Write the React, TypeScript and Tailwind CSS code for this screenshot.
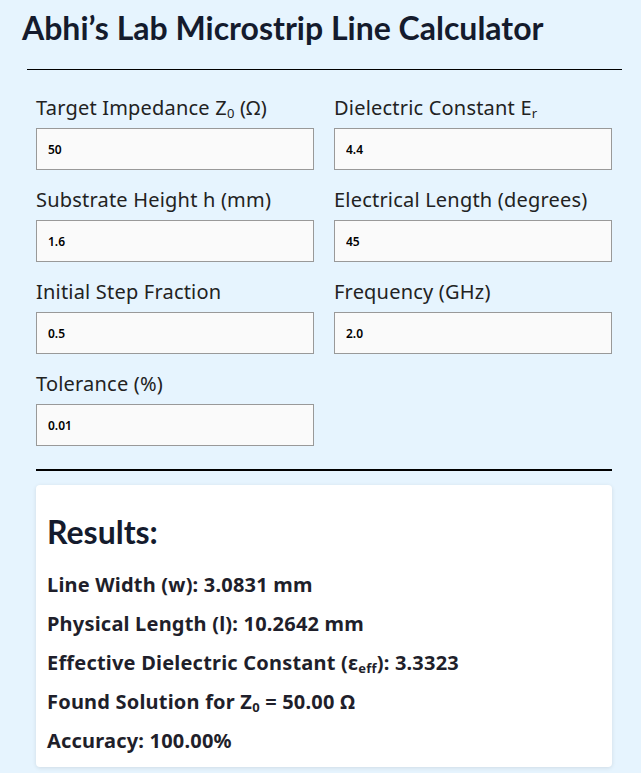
import React from 'react';

const body = { fontFamily: '"Noto Sans", "Open Sans", sans-serif' };
const heading = { fontFamily: 'Lato, "Noto Sans", sans-serif' };

function Field({ label, value }: { label: React.ReactNode; value: string }) {
  return (
    <div className="flex flex-col">
      <label className="text-[20px] leading-[28px] tracking-[0.2px] text-[#222]">{label}</label>
      <input
        readOnly
        value={value}
        className="mt-[6px] h-[42px] w-full border border-[#999] bg-[#fafafa] px-[11px] text-[12px] font-semibold text-black outline-none"
      />
    </div>
  );
}

export default function App() {
  return (
    <div className="min-h-[773px] bg-[#e6f4fe] text-[#1a1a2e]" style={body}>
      <h1 className="px-[22px] pt-[8px] text-[32px] font-bold leading-[40px] text-[#141b2d]" style={heading}>
        Abhi’s Lab Microstrip Line Calculator
      </h1>
      <div className="mx-[27px] mt-[21px] w-[595px] border-t border-black" />

      <div className="mx-[36px] mt-[24px] w-[576px]">
        <div className="grid grid-cols-2 gap-x-[20px] gap-y-[16px]">
          <Field label={<>Target Impedance Z<sub className="text-[13px]">0</sub> (Ω)</>} value="50" />
          <Field label={<>Dielectric Constant E<sub className="text-[13px]">r</sub></>} value="4.4" />
          <Field label="Substrate Height h (mm)" value="1.6" />
          <Field label="Electrical Length (degrees)" value="45" />
          <Field label="Initial Step Fraction" value="0.5" />
          <Field label="Frequency (GHz)" value="2.0" />
          <Field label="Tolerance (%)" value="0.01" />
        </div>

        <div className="mt-[23px] border-t-2 border-black" />

        <div className="mt-[14px] rounded-[4px] bg-white px-[11px] pb-[13px] pt-[29px] shadow-[0_1px_4px_rgba(0,0,0,0.1)]">
          <h2 className="text-[32px] font-bold leading-[36px] text-[#141b2d]" style={heading}>
            Results:
          </h2>
          <div className="mt-[22px] flex flex-col gap-[13px] text-[20px] font-bold leading-[26px] tracking-[0.2px] text-[#1f1f2b]">
            <p>Line Width (w): 3.0831 mm</p>
            <p>Physical Length (l): 10.2642 mm</p>
            <p>
              Effective Dielectric Constant (ε<sub className="text-[13px]">eff</sub>): 3.3323
            </p>
            <p>
              Found Solution for Z<sub className="text-[13px]">0</sub> = 50.00 Ω
            </p>
            <p>Accuracy: 100.00%</p>
          </div>
        </div>
      </div>
    </div>
  );
}
